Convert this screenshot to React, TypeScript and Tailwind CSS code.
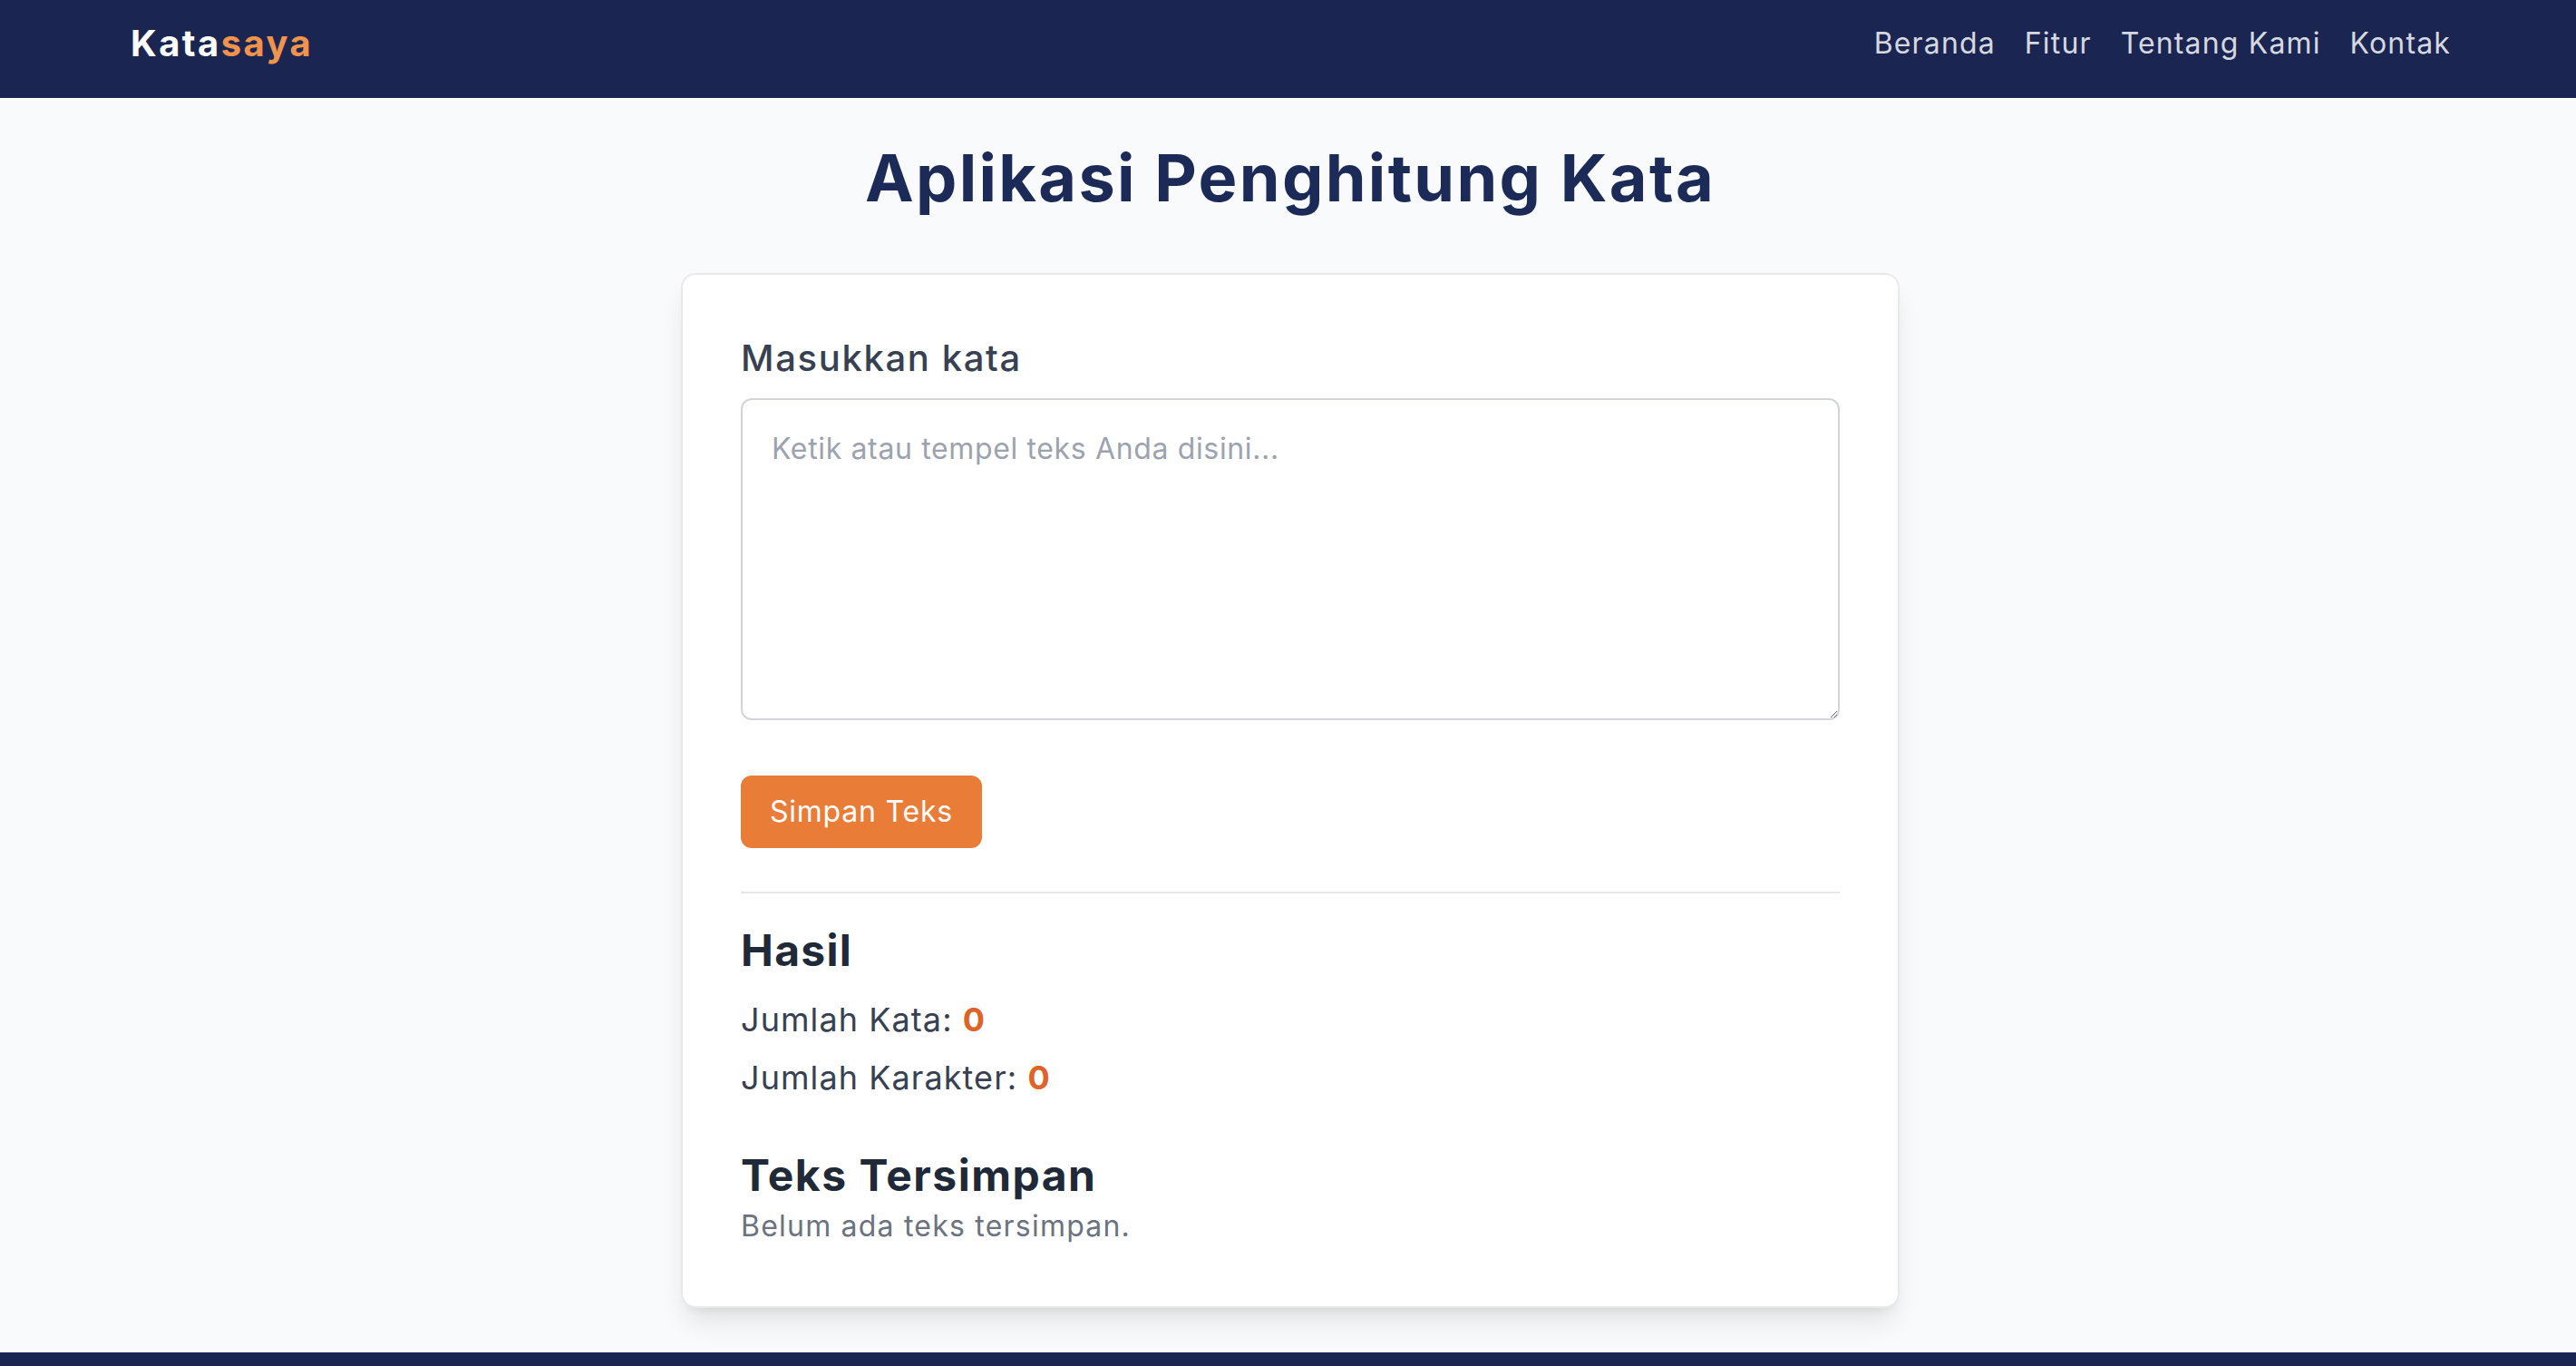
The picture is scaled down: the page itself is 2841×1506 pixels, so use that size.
import React from "react";

export default function App() {
  return (
    <div className="min-h-screen bg-[#f9fafb] font-[family-name:Inter,sans-serif] flex flex-col">
      <nav className="bg-[#1b2552] h-[108px] pb-[12px] pl-[144px] pr-[138px] flex items-center justify-between">
        <div className="text-[40px] leading-[56px] font-bold tracking-[0.06em]">
          <span className="text-white">Kata</span>
          <span className="text-[#f0934c]">saya</span>
        </div>
        <ul className="flex gap-[32px] text-[32px] leading-[48px] text-[#d6d8e0] tracking-[0.036em]">
          <li>Beranda</li>
          <li>Fitur</li>
          <li>Tentang Kami</li>
          <li>Kontak</li>
        </ul>
      </nav>

      <main className="pt-[48px] pb-[49px] pl-[5px] flex flex-col items-center">
        <h1 className="text-[72px] leading-[80px] font-bold text-[#1b2a57] tracking-[0.032em] mb-[65px]">
          Aplikasi Penghitung Kata
        </h1>

        <div className="w-[1344px] bg-white border-2 border-[#e8e9ee] rounded-[16px] p-[64px] shadow-[0_20px_30px_-6px_rgba(0,0,0,0.1),0_8px_12px_-8px_rgba(0,0,0,0.1)]">
          <label className="block text-[40px] leading-[56px] font-medium text-[#374151] tracking-[0.041em] mb-[16px]">
            Masukkan kata
          </label>
          <textarea
            rows={6}
            placeholder="Ketik atau tempel teks Anda disini..."
            className="block w-full h-[355px] border-2 border-[#d1d5db] rounded-[12px] p-[32px] pt-[30px] text-[32px] leading-[48px] text-[#374151] tracking-[0.02em] placeholder:text-[#9ca3af] outline-none"
          />
          <button className="mt-[61px] w-[266px] h-[80px] bg-[#e97c37] text-white rounded-[12px] text-[32px] leading-[48px] tracking-[0.025em]">
            Simpan Teks
          </button>

          <div className="mt-[48px] h-[2px] bg-[#e5e7eb]" />

          <h2 className="mt-[31px] text-[48px] leading-[64px] font-bold text-[#1f2937] tracking-[0.027em]">
            Hasil
          </h2>
          <p className="mt-[16px] text-[36px] leading-[56px] text-[#374151] tracking-[0.03em]">
            Jumlah Kata: <span className="font-bold text-[#dd6328]">0</span>
          </p>
          <p className="mt-[8px] text-[36px] leading-[56px] text-[#374151] tracking-[0.03em]">
            Jumlah Karakter: <span className="font-bold text-[#dd6328]">0</span>
          </p>

          <h2 className="mt-[48px] text-[48px] leading-[64px] font-bold text-[#1f2937] tracking-[0.031em]">
            Teks Tersimpan
          </h2>
          <p className="text-[32px] leading-[48px] text-[#6b7280] tracking-[0.038em]">
            Belum ada teks tersimpan.
          </p>
        </div>
      </main>

      <footer className="bg-[#1b2552] h-[120px]" />
    </div>
  );
}
